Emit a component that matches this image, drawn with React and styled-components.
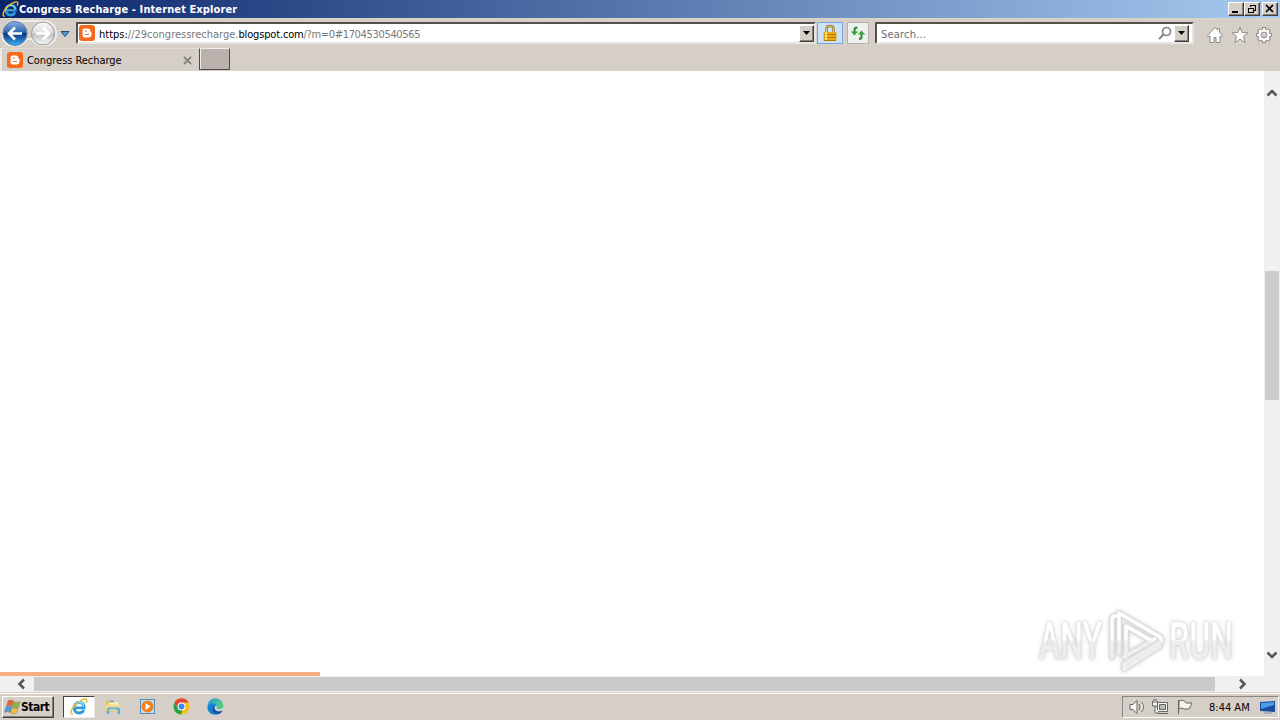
import React from 'react';
import styled, { createGlobalStyle, css } from 'styled-components';

const App = () => {
  return (
    <Screen>
      <GlobalStyle />
      <TitleBar>
        <IeLogo size={17} />
        <Title>Congress Recharge - Internet Explorer</Title>
        <WindowButtons>
          <WindowButton><svg width="12" height="10"><path d="M2 8h6" stroke="#000" strokeWidth="2" /></svg></WindowButton>
          <WindowButton>
            <svg width="12" height="10" fill="none" stroke="#000" shapeRendering="crispEdges">
              <path d="M4.5 3V1.5h5v5H8M4 1h6M2.5 4.5h5v4h-5zM2 4h6" />
            </svg>
          </WindowButton>
          <WindowButton $gap><svg width="12" height="10"><path d="M2 1l7 7M9 1L2 8" stroke="#000" strokeWidth="1.7" /></svg></WindowButton>
        </WindowButtons>
      </TitleBar>
      <NavBar>
        <NavButtons />
        <AddressBox>
          <BloggerIcon />
          <Url>
            <b>https:</b>//29congressrecharge.<b>blogspot.com</b>
            <UrlTail>/?m=0#1704530540565</UrlTail>
          </Url>
          <DropDown />
        </AddressBox>
        <LockButton><LockIcon /></LockButton>
        <RefreshButton><RefreshIcon /></RefreshButton>
        <SearchBox>
          <SearchText>Search...</SearchText>
          <svg width="16" height="16" fill="none" stroke="#858585">
            <circle cx="8.5" cy="6.5" r="4" strokeWidth="1.7" />
            <path d="M5.5 9.5L1 14" strokeWidth="2" />
          </svg>
          <DropDown />
        </SearchBox>
        <Tools>
          <HomeIcon />
          <StarIcon />
          <GearIcon />
        </Tools>
      </NavBar>
      <TabBar>
        <Tab>
          <BloggerIcon />
          <TabTitle>Congress Recharge</TabTitle>
          <svg width="9" height="9"><path d="M1 1l7 7M8 1L1 8" stroke="#858080" strokeWidth="1.8" /></svg>
        </Tab>
        <NewTab />
      </TabBar>
      <Viewport>
        <Page>
          <Progress />
          <Watermark />
        </Page>
        <VerticalScroll>
          <Arrow d="M3.500 9.500L8 5l4.500 4.500" />
          <VerticalThumb />
          <Arrow d="M3.500 5.500L8 10 12.500 5.500" />
        </VerticalScroll>
      </Viewport>
      <HorizontalScroll>
        <Arrow d="M10 3.500L5.500 8l4.500 4.500" />
        <HorizontalThumb />
        <Arrow d="M5 3.500L9.500 8 5 12.500" />
      </HorizontalScroll>
      <TaskBar>
        <StartButton>
          <WindowsFlag />
          <span>Start</span>
        </StartButton>
        <ActiveTask><IeLogo size={18} /></ActiveTask>
        <QuickLaunch>
          <FolderIcon />
          <PlayerIcon />
          <ChromeIcon />
          <EdgeIcon />
        </QuickLaunch>
        <Tray>
          <TrayIcons />
          <Clock>8:44 AM</Clock>
          <svg width="16" height="15">
            <path d="M0 2l15-1v11l-15-1z" fill="#174f9c" />
            <path d="M1 3l13-1v3L1 9z" fill="#4d9be4" />
            <path d="M4 13h8" stroke="#7694b5" />
          </svg>
        </Tray>
      </TaskBar>
    </Screen>
  );
};

const IeLogo = ({ size }) => (
  <svg width={size} height={size} viewBox="0 0 18 18" fill="none">
    <path d="M13.800 12C12.500 14.500 10.500 15 9 15c-3 0-5-2.300-5-5.300S6 4.500 9.200 4.500s5 2 5 5.300H5" stroke="#2d9bdb" strokeWidth="2.800" />
    <path d="M4 10C4 6.500 6 4.500 9.200 4.500s4.600 2 4.600 4" stroke="#8bd9fa" strokeWidth="1.300" />
    <path d="M3 16c-3 .5-2.500-4.500 2-9C10 2 15 0 16.500 1.500c.6.800.2 2.200-.5 3.500" stroke="#e9bd34" strokeWidth="1.500" />
  </svg>
);

const BloggerIcon = () => (
  <svg width="16" height="16" fill="none">
    <rect width="16" height="16" rx="3" fill="#f5691c" />
    <path d="M5.500 4.500h3q2 0 2 2 0 1.200 1 1.200v1.800q0 2-2 2h-4q-1 0-1-1v-5q0-1 1-1z" stroke="#fff" strokeWidth="2" fill="#fff" />
    <path d="M6 6h2M6 9.500h4" stroke="#f5691c" strokeWidth="1.200" />
  </svg>
);

const NavButtons = () => (
  <svg width="76" height="29" viewBox="0 1 76 29" fill="none">
    <defs>
      <linearGradient id="back" x2="0" y2="1">
        <stop stopColor="#8eb1df" />
        <stop offset=".48" stopColor="#2860ad" />
        <stop offset=".5" stopColor="#08347e" />
        <stop offset="1" stopColor="#3eb2f4" />
      </linearGradient>
      <linearGradient id="forward" x2="0" y2="1">
        <stop stopColor="#fafafa" />
        <stop offset=".48" stopColor="#dedede" />
        <stop offset=".5" stopColor="#bfc1c5" />
        <stop offset="1" stopColor="#f6f6f6" />
      </linearGradient>
    </defs>
    <path d="M15 3h29q12 1 12 13c0 14-20 14-24 5h-6C22 32 2 30 2 16" stroke="#eeece8" strokeWidth="2" />
    <circle cx="15" cy="15.500" r="12" fill="url(#back)" stroke="#527bad" />
    <circle cx="43" cy="15.500" r="11.500" fill="url(#forward)" stroke="#969ca4" />
    <path d="M22 15.500H9M15 9.500l-6 6 6 6M36 15.500h13M43 9.500l6 6-6 6" stroke="#fff" strokeWidth="2.600" />
    <path d="M61 13.500h8l-4 5z" fill="#4b9bd0" stroke="#224b7c" />
  </svg>
);

const LockIcon = () => (
  <svg width="14" height="18" fill="none">
    <path d="M3.500 9V5q0-3 3.500-3t3.500 3v4" stroke="#977626" strokeWidth="2.500" />
    <path d="M3.500 9V5q0-3 3.500-3t3.500 3v4" stroke="#dfc779" />
    <rect x=".5" y="8" width="13" height="9" fill="#e8a91b" />
    <path d="M1 10.500h12M1 13.500h12M1 16.500h12" stroke="#b97900" />
    <path d="M3 8v8" stroke="#ffdc61" strokeWidth="2" />
  </svg>
);

const RefreshIcon = () => (
  <svg width="16" height="16" fill="none">
    <path d="M4.500 8V4.500q0-2 3-2M11.500 8v4q0 2-2.500 2" stroke="#27852d" strokeWidth="2" />
    <path d="M.8 6.500h7.400L4.500 10.500zM7.800 9.500h7.400L11.500 5.500z" fill="#39a53a" />
  </svg>
);

const DropDown = () => (
  <DropButton>
    <svg width="7" height="4"><path d="M0 0h7L3.500 4z" /></svg>
  </DropButton>
);

const HomeIcon = () => (
  <svg width="18" height="18" fill="#fff" stroke="#8f8b88">
    <path d="M1.500 9.500L9 1.500l2.500 2.500V2.500h2V6l3 3.500-1 1.300-1.500-1v6.700h-4v-5H8v5H4V9.800l-1.500 1z" />
  </svg>
);

const StarIcon = () => (
  <svg width="18" height="18" fill="#fff" stroke="#8f8b88">
    <path d="M9 1l2.100 5.600 5.900.2-4.600 3.700 1.700 6L9 13.200l-5.100 3.300 1.700-6L1 6.800l5.900-.2z" />
  </svg>
);

const GearIcon = () => (
  <svg width="18" height="18" fill="none">
    <g stroke="#8f8b88" strokeWidth="4">
      <path d="M9 1v16M1 9h16M3.300 3.300l11.400 11.400M14.700 3.300L3.300 14.700" />
    </g>
    <circle cx="9" cy="9" r="6.300" fill="#8f8b88" />
    <path d="M9 2v14M2 9h14M4 4l10 10M14 4L4 14" stroke="#fff" strokeWidth="2.200" />
    <circle cx="9" cy="9" r="5.500" fill="#fff" />
    <circle cx="9" cy="9" r="2.900" fill="#d4d0c8" stroke="#8f8b88" />
  </svg>
);

const Arrow = ({ d }) => (
  <svg width="16" height="16" fill="none"><path d={d} stroke="#55565a" strokeWidth="2.500" /></svg>
);

const Watermark = () => (
  <Brand width="210" height="76" viewBox="0 0 210 76">
    <defs>
      <linearGradient id="shine" x1="0" y1="0" x2="0" y2="76" gradientUnits="userSpaceOnUse">
        <stop stopColor="#fff" />
        <stop offset=".52" stopColor="#fff" />
        <stop offset=".55" stopColor="#ededed" />
        <stop offset="1" stopColor="#f0f0f0" />
      </linearGradient>
    </defs>
    <g fill="url(#shine)">
      <text x="9" y="59" textLength="63" lengthAdjust="spacingAndGlyphs">ANY</text>
      <text x="139" y="59" textLength="64" lengthAdjust="spacingAndGlyphs">RUN</text>
    </g>
    <g fill="none" strokeLinecap="round" strokeLinejoin="round">
      <path d="M82 57V20q0-4 4-4M89 53V13l41 24M96 57V26l26 15M130 37l2 4-38 23v5l36-23M94 57l31-18" stroke="#dedede" strokeWidth="5" />
      <path d="M82 57V20q0-4 4-4M89 53V13l41 24M96 57V26l26 15M130 37l2 4-38 23v5l36-23M94 57l31-18" stroke="url(#shine)" strokeWidth="3.500" />
    </g>
  </Brand>
);

const WindowsFlag = () => (
  <svg width="17" height="18" stroke="#746d67" strokeWidth=".4">
    <path d="M4 3q3-2 5.500 0L8 8.500q-3-2-5.500 0z" fill="#ea6330" />
    <path d="M10 3.500q3 2 6 0L14.500 9q-3 2-6 0z" fill="#8bb741" />
    <path d="M2 9.200q3-2 5.700 0L6.200 14.500q-3-2-5.700 0z" fill="#4c99dc" />
    <path d="M8.200 9.800q3 2 6 0l-1.500 5q-3 2-6 0z" fill="#f5c43c" />
  </svg>
);

const FolderIcon = () => (
  <svg width="18" height="18">
    <path d="M1 3.500l2-1h4l1 2h7v9H1z" fill="#e3bd60" />
    <path d="M4 4h10v5H4z" fill="#f7edba" />
    <path d="M5 3.500h4" stroke="#55a9c9" strokeWidth="1.500" />
    <path d="M1 6.500h14V13H1z" fill="#f7dc87" />
    <path d="M3 16v-3.500q0-2 2-2h7q2 0 2 2V16" fill="none" stroke="#65a9ca" strokeWidth="2.500" />
    <path d="M3 13q0-2 2-2h7" fill="none" stroke="#a6d5e8" />
  </svg>
);

const PlayerIcon = () => (
  <svg width="18" height="18">
    <rect x="1.500" y="1.500" width="14" height="14" fill="#c6def0" stroke="#538cbd" />
    <circle cx="8.500" cy="8.500" r="6" fill="#f28119" />
    <path d="M6.500 5v7l5-3.500z" fill="#fff" />
  </svg>
);

const ChromeIcon = () => (
  <svg width="18" height="18">
    <circle cx="8.500" cy="8.500" r="8" fill="#fbc116" />
    <path d="M1.500 4.500A8 8 0 0 1 15.500 4.500H8.500L5 10.500z" fill="#ea4335" />
    <path d="M1.500 4.500L6 12l4-1-2 5.500A8 8 0 0 1 1.500 4.500" fill="#24a148" />
    <circle cx="8.500" cy="8.500" r="4" fill="#fff" />
    <circle cx="8.500" cy="8.500" r="3" fill="#4285f4" />
  </svg>
);

const EdgeIcon = () => (
  <svg width="18" height="18">
    <defs>
      <linearGradient id="wave" y2=".4">
        <stop stopColor="#2198e2" />
        <stop offset="1" stopColor="#57cc83" />
      </linearGradient>
    </defs>
    <path d="M.5 9a8 8 0 0 1 16-1.500c.3 4-4.500 4.500-6.500 3C9 9.800 10.500 9 9.500 7.500Q5 3.500.5 9" fill="url(#wave)" />
    <path d="M.5 9C3 3.500 9 5 9.500 7.500 6.500 8 7 13 11 13.500q2.500.2 4.500-1C12 19 0 18 .5 9" fill="#1680d5" />
    <path d="M6.500 8c-3 5 1 8 5 8 2-.5 3.500-2 4-3.500-4 2.500-9 0-8-3.500" fill="#124f9d" />
  </svg>
);

const TrayIcons = () => (
  <svg width="72" height="18" fill="#f7f5f2" stroke="#666">
    <path d="M2 6.500h3l4-4v13l-4-4H2zM11 6q2 3 0 6M13.500 4q4 5 0 10" />
    <path d="M29.500 4.500h10v9h-10zM30 15.500h10" />
    <path d="M31.500 6.500h6v5h-6z" fill="#bbb" />
    <path d="M24.500 3v5h5V3M26 1v4m2-4v4m-1 3v7h4" />
    <path d="M50.500 2v14M51 3q5-2 7 2h6l-3 6h-5q-2-2-5 0z" />
  </svg>
);

const GlobalStyle = createGlobalStyle`
  * { box-sizing: border-box; }
  body { margin: 0; overflow: hidden; }
  svg { display: block; flex: none; }
`;

const raised = css`
  border: 1px solid;
  border-color: #fff #404040 #404040 #fff;
  box-shadow: inset -1px -1px #868078;
  background: #d4d0c8;
`;

const Screen = styled.div`
  width: 1280px;
  height: 720px;
  display: flex;
  flex-direction: column;
  background: #d6cfc8;
  color: #000;
  font: 11px "DejaVu Sans Condensed", "DejaVu Sans", sans-serif;
  font-stretch: condensed;
  white-space: nowrap;
`;

const TitleBar = styled.header`
  display: flex;
  align-items: center;
  height: 18px;
  padding: 0 2px;
  background: linear-gradient(90deg, #0a246a, #a6caf0);
`;

const Title = styled.span`
  color: #fff;
  font-weight: bold;
  letter-spacing: 0.1px;
`;

const WindowButtons = styled.div`
  display: flex;
  margin-left: auto;
`;

const WindowButton = styled.div`
  ${raised}
  width: 16px;
  height: 14px;
  margin-left: ${props => props.$gap ? '2px' : '0'};
  padding: 1px;
`;

const NavBar = styled.nav`
  display: flex;
  align-items: flex-start;
  height: 30px;
  border-top: 1px solid #d8d8c7;
`;

const sunken = css`
  display: flex;
  align-items: center;
  height: 22px;
  margin-top: 3px;
  background: #fff;
  border: 2px solid;
  border-color: #56504c #e9e5e0 #e9e5e0 #56504c;
`;

const AddressBox = styled.div`
  ${sunken}
  width: 740px;
  padding-left: 1px;
`;

const Url = styled.span`
  margin-left: 4px;
  padding-top: 2px;
  color: #777;
  letter-spacing: 0;
  b {
    color: #000;
    font-weight: normal;
  }
  b + b { letter-spacing: -0.16px; }
`;

const UrlTail = styled.span`
  letter-spacing: -0.33px;
`;

const DropButton = styled.div`
  ${raised}
  display: flex;
  width: 15px;
  height: 17px;
  margin-left: auto;
  align-items: center;
  justify-content: center;
`;

const LockButton = styled.div`
  width: 26px;
  height: 22px;
  margin: 3px 0 0 1px;
  padding: 1px 5px;
  border: 1px solid #76a6dc;
  background: #cce2fb;
`;

const RefreshButton = styled.div`
  width: 22px;
  height: 22px;
  margin: 3px 6px 0 4px;
  padding: 2px;
  border: 1px solid #b4b1ae;
  background: #edf0ed;
`;

const SearchBox = styled.div`
  ${sunken}
  width: 319px;
  padding-right: 3px;
  > svg { margin-left: auto; }
  ${DropButton} { margin-left: 0; }
`;

const SearchText = styled.span`
  margin-left: 4px;
  padding-top: 2px;
  color: #6d6d6d;
  letter-spacing: 0.2px;
`;

const Tools = styled.div`
  display: flex;
  gap: 6.5px;
  margin: 7px 0 0 12px;
`;

const TabBar = styled.div`
  display: flex;
  height: 23px;
`;

const Tab = styled.div`
  display: flex;
  align-items: center;
  width: 199px;
  padding: 0 7px 0 5px;
  border-left: 2px solid #eeeae5;
  border-top: 1px solid #e2ddd7;
  > :last-child { margin-left: auto; }
`;

const TabTitle = styled.span`
  margin-left: 4px;
  letter-spacing: -0.05px;
`;

const NewTab = styled.div`
  width: 31px;
  height: 22px;
  background: #bab1ad;
  border: 1px solid #504846;
  border-top-color: #eee;
  box-shadow: inset 1px 0 #eee;
`;

const Viewport = styled.main`
  display: flex;
  height: 605px;
`;

const Page = styled.div`
  position: relative;
  display: flex;
  align-items: flex-end;
  width: 1264px;
  background: #fff;
`;

const Progress = styled.div`
  width: 320px;
  height: 4px;
  background: #f4b084;
`;

const Brand = styled.svg`
  position: absolute;
  right: 24px;
  bottom: 0;
  overflow: visible;
  font: 500 51px Roboto, sans-serif;
  filter: drop-shadow(0 0 1px #ccc) drop-shadow(0 0 2px #ddd);
`;

const VerticalScroll = styled.div`
  width: 16px;
  padding-top: 15px;
  background: #f0f0f0;
`;

const VerticalThumb = styled.div`
  width: 14px;
  height: 129px;
  margin: 169px 1px 247px;
  background: #cdcdcd;
`;

const HorizontalScroll = styled.div`
  display: flex;
  height: 16px;
  padding-left: 14px;
  background: #f0f0f0;
`;

const HorizontalThumb = styled.div`
  width: 1181px;
  height: 14px;
  margin: 1px 20px 0 4px;
  background: #cacaca;
`;

const TaskBar = styled.footer`
  display: flex;
  height: 28px;
  padding: 3px 2px 2px;
  border-top: 1px solid #d4d0c8;
  box-shadow: inset 0 1px #fff;
`;

const StartButton = styled.div`
  ${raised}
  display: flex;
  align-items: center;
  width: 52px;
  height: 22px;
  padding-left: 1px;
  font-weight: bold;
  font-size: 12px;
  letter-spacing: -0.5px;
`;

const ActiveTask = styled.div`
  width: 32px;
  height: 22px;
  margin-left: 9px;
  padding: 1px 6px;
  background: #fff;
  border: 1px solid #454341;
  border-right-color: #eee;
  border-bottom-color: #eee;
`;

const QuickLaunch = styled.div`
  display: flex;
  gap: 16px;
  margin: 2px 0 0 9.5px;
`;

const Tray = styled.div`
  display: flex;
  align-items: center;
  width: 157px;
  height: 22px;
  margin: 0 -1px 0 auto;
  padding-left: 5px;
  border: 1px solid;
  border-color: #8b8680 #fff #fff #8b8680;
`;

const Clock = styled.span`
  width: 51px;
  margin-left: 9px;
`;

export default App;
